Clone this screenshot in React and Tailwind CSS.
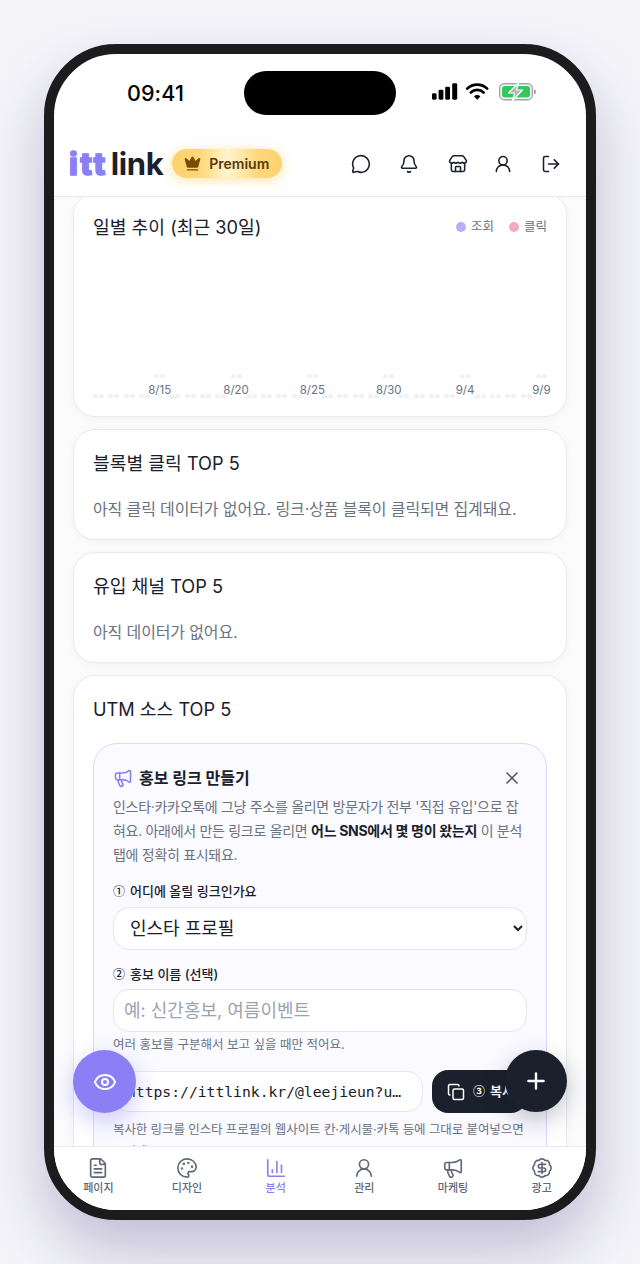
import React from "react";
import { MessageCircle, Bell, Store, UserRound, LogOut, Crown, FileText, Palette, ChartColumn, Megaphone, BadgeDollarSign, X, Eye, Plus, Copy } from "lucide-react";

const labels = { 4: "8/15", 9: "8/20", 14: "8/25", 19: "8/30", 24: "9/4", 29: "9/9" };
const days = Array.from({ length: 30 }, (_, i) => i);
const nav = [
  { label: "페이지", Icon: FileText },
  { label: "디자인", Icon: Palette },
  { label: "분석", Icon: ChartColumn, active: true },
  { label: "관리", Icon: UserRound },
  { label: "마케팅", Icon: Megaphone },
  { label: "광고", Icon: BadgeDollarSign },
];

function StatusIcons() {
  return (
    <svg width="106" height="18" viewBox="0 0 106 18" fill="none">
      <rect x="0" y="10.3" width="4.6" height="6.4" rx="1.4" fill="#000" />
      <rect x="6.6" y="6.7" width="4.8" height="10" rx="1.4" fill="#000" />
      <rect x="13.2" y="3.7" width="4.8" height="13" rx="1.4" fill="#000" />
      <rect x="20.2" y="0.3" width="5" height="16.4" rx="1.4" fill="#000" />
      <path d="M35.2 5.6a14.5 14.5 0 0 1 20 0" stroke="#000" strokeWidth="2.6" strokeLinecap="round" />
      <path d="M38.8 9.5a9.2 9.2 0 0 1 12.8 0" stroke="#000" strokeWidth="2.6" strokeLinecap="round" />
      <path d="M42 13.4l3.2 3.3 3.2-3.3a4.6 4.6 0 0 0-6.4 0z" fill="#000" />
      <rect x="67.7" y="0.7" width="32.6" height="16" rx="4.6" stroke="#a3a3a3" strokeWidth="1.4" />
      <rect x="70" y="3" width="28" height="11.4" rx="2.6" fill="#34c759" />
      <path d="M102 6.2c1.4.4 2.2 1.4 2.2 2.6s-.8 2.2-2.2 2.6z" fill="#a3a3a3" />
      <path d="M86.5 -0.2 L76.5 10 H82.6 L80.5 17.5 L90.5 7 H84.5 Z" fill="#b5b5b5" stroke="#fff" strokeWidth="1.2" strokeLinejoin="round" />
    </svg>
  );
}

function Num({ children }) {
  return <span className="mr-[5px] font-['Noto_Sans_CJK_KR'] text-[12px]">{children}</span>;
}

function Card({ title, children, className = "" }) {
  return (
    <section className={`rounded-[22px] border border-[#e9eaee] bg-white px-[19px] py-5 shadow-[0_2px_8px_rgba(17,24,39,0.04)] ${className}`}>
      <h2 className="text-[18.2px] leading-[26px] font-normal text-[#1a202c]">{title}</h2>
      {children}
    </section>
  );
}

export default function App() {
  return (
    <div
      className="h-[1264px] w-[640px] overflow-hidden bg-[#f4f4f9] p-[44px] text-[#1a202c]"
      style={{ fontFamily: 'Inter, "Noto Sans CJK KR", sans-serif' }}
    >
      <div className="relative flex h-[1176px] w-[552px] flex-col overflow-hidden rounded-[72px] border-[10px] border-[#1c1c1e] bg-white shadow-[0_30px_60px_rgba(60,50,120,0.28)]">
        {/* status bar */}
        <div className="flex h-[77px] shrink-0 items-start justify-between pt-[17px]">
          <div className="w-[190px] pt-[7px] pl-[73px] text-[21.5px] leading-[30px] font-medium tracking-[0.1px] text-black">09:41</div>
          <div className="h-[44px] w-[152px] rounded-full bg-black" />
          <div className="flex w-[190px] justify-end pt-[12px] pr-[48px]"><StatusIcons /></div>
        </div>

        {/* header */}
        <header className="flex h-[66px] shrink-0 items-center border-b border-[#e8e9ed] pr-[25px] pl-[15px]">
          <div className="flex items-baseline text-[31px] leading-none font-extrabold">
            <span className="text-[#8b7ff5] [-webkit-text-stroke:1.5px_#8b7ff5] tracking-[2.5px]">itt</span>
            <span className="ml-[3px] font-bold tracking-[-0.4px] text-[#1a202c]">link</span>
          </div>
          <div className="ml-[9px] flex h-[29px] w-[110px] items-center gap-[8px] rounded-full bg-[linear-gradient(90deg,#fdd26e_0%,#fdd777_25%,#fff4cf_50%,#fdd777_80%,#fdd26e_100%)] pl-[12px] shadow-[0_2px_12px_rgba(253,200,80,0.5)]">
            <Crown size={17} className="text-[#7a4c00]" fill="#7a4c00" />
            <span className="text-[14px] font-semibold text-[#57390a]">Premium</span>
          </div>
          <div className="ml-auto flex items-center text-[#1a202c]">
            <MessageCircle size={20} strokeWidth={1.9} />
            <Bell size={20} strokeWidth={1.9} className="ml-[28px]" />
            <Store size={20} strokeWidth={1.9} className="ml-[29px]" />
            <UserRound size={20} strokeWidth={1.9} className="ml-[25px]" />
            <LogOut size={20} strokeWidth={1.9} className="ml-[28px]" />
          </div>
        </header>

        {/* scrolling content */}
        <main className="flex min-h-0 flex-1 flex-col gap-3 overflow-hidden bg-[#fbfbfc] px-[19px]">
          <section className="-mt-[4px] h-[224px] shrink-0 rounded-[22px] border border-[#e9eaee] bg-white px-[19px] pt-5 pb-5 shadow-[0_2px_8px_rgba(17,24,39,0.04)]">
            <div className="flex items-center justify-between">
              <h2 className="text-[18.2px] leading-[26px] font-normal">일별 추이 (최근 30일)</h2>
              <div className="flex items-center text-[12.5px] text-[#6b7280]">
                <span className="h-[10px] w-[10px] rounded-full bg-[#b4b0ff]" />
                <span className="ml-[5px]">조회</span>
                <span className="ml-[15px] h-[10px] w-[10px] rounded-full bg-[#f4a9c5]" />
                <span className="ml-[5px]">클릭</span>
              </div>
            </div>
            <div className="mt-[22px] flex h-[136px] gap-[4px]">
              {days.map((d) => (
                <div key={d} className="flex h-full w-[11.28px] shrink-0 flex-col items-center justify-end">
                  <div className="flex items-end gap-[1px]">
                    <span className="h-[4px] w-[5px] rounded-t-full bg-[#f0f1f5]" />
                    <span className="h-[4px] w-[5px] rounded-t-full bg-[#f0f1f5]" />
                  </div>
                  {labels[d] && (
                    <span className="mt-[4px] text-[11.5px] leading-[16px] whitespace-nowrap text-[#6b7280]">{labels[d]}</span>
                  )}
                </div>
              ))}
            </div>
          </section>

          <Card title="블록별 클릭 TOP 5" className="h-[111px] shrink-0">
            <p className="mt-[21px] text-[16px] leading-[24px] tracking-[-0.13px] text-[#6b7280]">아직 클릭 데이터가 없어요. 링크·상품 블록이 클릭되면 집계돼요.</p>
          </Card>

          <Card title="유입 채널 TOP 5" className="h-[111px] shrink-0">
            <p className="mt-[21px] text-[16px] leading-[24px] tracking-[-0.13px] text-[#6b7280]">아직 데이터가 없어요.</p>
          </Card>

          <Card title="UTM 소스 TOP 5" className="shrink-0">
            <div className="mt-[21px] rounded-[24px] border border-[#ddd8fd] bg-[#fafaff] px-[19px] pt-[22px] pb-5">
              <div className="flex items-center justify-between pr-[5px]">
                <div className="flex items-center gap-[6px]">
                  <Megaphone size={20} strokeWidth={1.9} className="text-[#8b7ff5]" />
                  <h3 className="text-[16px] leading-[24px] font-bold">홍보 링크 만들기</h3>
                </div>
                <X size={20} strokeWidth={1.9} className="text-[#4b5563]" />
              </div>
              <p className="mt-[5px] text-[14px] leading-[24px] tracking-[-0.3px] text-[#6b7280]">
                인스타·카카오톡에 그냥 주소를 올리면 방문자가 전부 '직접 유입'으로 잡혀요. 아래에서 만든 링크로 올리면 <b className="font-bold text-[#1a202c]">어느 SNS에서 몇 명이 왔는지</b> 이 분석 탭에 정확히 표시돼요.
              </p>
              <div className="mt-[14px] text-[13px] leading-[20px] font-medium"><Num>①</Num>어디에 올릴 링크인가요</div>
              <select className="mt-[6px] h-[43px] w-full rounded-[16px] border border-[#e5e7eb] bg-white px-[12px] text-[18px] text-[#1a202c]">
                <option>인스타 프로필</option>
              </select>
              <div className="mt-[14px] text-[13px] leading-[20px] font-medium"><Num>②</Num>홍보 이름 (선택)</div>
              <input
                readOnly
                placeholder="예: 신간홍보, 여름이벤트"
                className="mt-[5px] h-[43px] w-full rounded-[16px] border border-[#e5e7eb] bg-white px-[10px] text-[18px] placeholder:text-[#9ca3af]"
              />
              <p className="mt-[3px] text-[12.5px] leading-[20px] text-[#6b7280]">여러 홍보를 구분해서 보고 싶을 때만 적어요.</p>
              <div className="mt-[15px] flex items-center gap-[9px]">
                <input
                  readOnly
                  value="https://ittlink.kr/@leejieun?utm_source=instagram&utm_medium=profile"
                  className="h-[41px] w-[310px] shrink-0 rounded-[16px] border border-[#e5e7eb] bg-white px-[13px] text-[14.7px] text-ellipsis"
                  style={{ fontFamily: '"DejaVu Sans Mono", monospace' }}
                />
                <button className="flex h-[43px] w-[95px] shrink-0 items-center gap-[8px] overflow-hidden rounded-[16px] bg-[#1a202c] pl-[15px] text-[13px] font-bold whitespace-nowrap text-white">
                  <Copy size={18} strokeWidth={2} />
                  <span><Num>③</Num>복사</span>
                </button>
              </div>
              <p className="mt-[6px] text-[12.5px] leading-[22px] tracking-[-0.1px] text-[#6b7280]">복사한 링크를 인스타 프로필의 웹사이트 칸·게시물·카톡 등에 그대로 붙여넣으면 끝이에요.</p>
            </div>
          </Card>
        </main>

        {/* bottom nav */}
        <nav className="grid h-[64px] shrink-0 grid-cols-6 border-t border-[#e8e9ed] bg-white">
          {nav.map(({ label, Icon, active }) => (
            <div key={label} className={`flex flex-col items-center pt-[10px] ${active ? "text-[#8b7ff5]" : "text-[#5f6876]"}`}>
              <Icon size={22} strokeWidth={1.8} />
              <span className="text-[11px] leading-[18px] font-medium">{label}</span>
            </div>
          ))}
        </nav>

        {/* floating buttons */}
        <button className="absolute top-[996px] left-[19px] flex h-[63px] w-[63px] items-center justify-center rounded-full bg-[#8b7ff5] text-white shadow-[0_8px_24px_rgba(139,127,245,0.4)]">
          <Eye size={24} strokeWidth={2} />
        </button>
        <button className="absolute top-[996px] left-[451px] flex h-[62px] w-[62px] items-center justify-center rounded-full bg-[#1a202c] text-white shadow-[0_8px_24px_rgba(17,24,39,0.25)]">
          <Plus size={26} strokeWidth={2.2} />
        </button>
      </div>
    </div>
  );
}
